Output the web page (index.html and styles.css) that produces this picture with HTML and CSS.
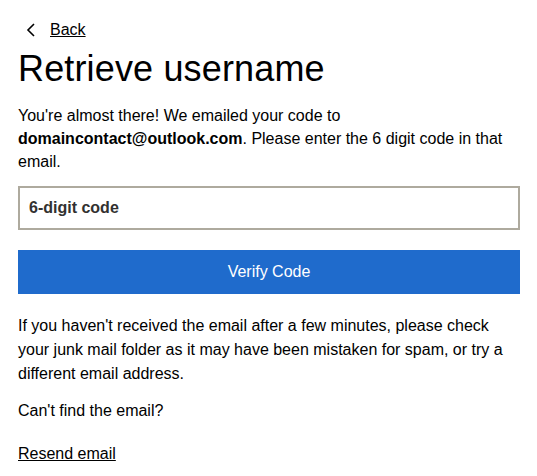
FILE: index.html
```html
<!DOCTYPE html>
<html>
<head>
<meta charset="utf-8">
<link rel="stylesheet" href="styles.css">
</head>
<body>
<main class="page">
  <a class="back" href="#">
    <svg class="chev" width="10" height="14" viewBox="0 0 10 14"><path d="M8 1 L2 7 L8 13" fill="none" stroke="#000" stroke-width="1.6"/></svg>
    <span class="back-text">Back</span>
  </a>
  <h1 class="title">Retrieve username</h1>
  <p class="intro">You're almost there! We emailed your code to <b>domaincontact@outlook.com</b>. Please enter the 6 digit code in that email.</p>
  <input class="code" type="text" placeholder="6-digit code">
  <button class="verify">Verify Code</button>
  <p class="info">If you haven't received the email after a few minutes, please check your junk mail folder as it may have been mistaken for spam, or try a different email address.</p>
  <p class="cant">Can't find the email?</p>
  <a class="resend" href="#">Resend email</a>
</main>
</body>
</html>
```
FILE: styles.css
```css
html, body { margin: 0; padding: 0; background: #fff; }
body { font-family: Arial, "Liberation Sans", sans-serif; color: #000; }
.page { padding: 19px 17px 0 18px; display: flex; flex-direction: column; }
.back { display: flex; align-items: center; color: #000; text-decoration: none; height: 22px; font-size: 16px; }
.chev { margin-left: 8px; margin-right: 14px; }
.back-text { text-decoration: underline; }
.title { font-size: 36px; font-weight: normal; margin: 6px 0 0 0; line-height: 44px; letter-spacing: 0.15px; }
.intro { font-size: 16px; line-height: 23px; margin: 13px 0 0 0; }
.intro b { font-weight: bold; }
.code { box-sizing: border-box; height: 44px; width: 100%; margin-top: 13px; border: 2px solid #aeaa9e; padding: 0 9px; font-family: inherit; font-size: 16px; font-weight: bold; color: #323130; outline: none; }
.code::placeholder { color: #323130; font-weight: bold; opacity: 1; }
.verify { box-sizing: border-box; height: 44px; width: 100%; margin-top: 20px; border: none; background: #1f6bcc; color: #fff; font-family: inherit; font-size: 16px; }
.info { font-size: 16px; line-height: 24px; margin: 20px 0 0 0; }
.cant { font-size: 16px; line-height: 24px; margin: 13px 0 0 0; }
.resend { font-size: 16px; line-height: 24px; color: #000; text-decoration: underline; margin-top: 19px; align-self: flex-start; }
```
